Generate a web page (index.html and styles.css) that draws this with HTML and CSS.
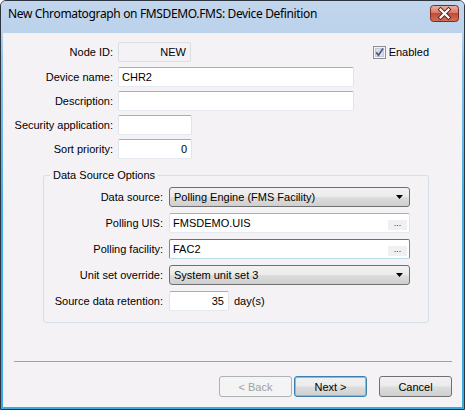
FILE: index.html
```html
<!DOCTYPE html>
<html>
<head>
<meta charset="utf-8">
<title>Device Definition</title>
<link rel="stylesheet" href="styles.css">
</head>
<body>
<div class="window">
  <div class="titlebar">
    <span class="title">New Chromatograph on FMSDEMO.FMS: Device Definition</span>
    <span class="close">
      <svg width="29" height="17" viewBox="0 0 29 17">
        <defs>
          <linearGradient id="cg" x1="0" y1="0" x2="0" y2="1">
            <stop offset="0" stop-color="#eab3a6"/>
            <stop offset="0.45" stop-color="#d77a68"/>
            <stop offset="0.5" stop-color="#c44a35"/>
            <stop offset="1" stop-color="#d0735a"/>
          </linearGradient>
        </defs>
        <rect x="0.5" y="0.5" width="28" height="16" rx="3" fill="url(#cg)" stroke="#7c2b22"/>
        <path d="M10.5 4.5 L18.5 12.5 M18.5 4.5 L10.5 12.5" stroke="#5a2019" stroke-width="4" stroke-linecap="square"/>
        <path d="M10.5 4.5 L18.5 12.5 M18.5 4.5 L10.5 12.5" stroke="#ffffff" stroke-width="2.2" stroke-linecap="square"/>
      </svg>
    </span>
  </div>
  <div class="client">
    <div class="top">
      <div class="row">
        <span class="lbl">Node ID:</span>
        <div class="field ro num w-id">NEW</div>
        <div class="check">
          <span class="cbox">
            <svg width="13" height="13" viewBox="0 0 13 13">
              <rect x="0.5" y="0.5" width="12" height="12" fill="#f4f4f4" stroke="#8e8f8f"/>
              <rect x="2.5" y="2.5" width="8" height="8" fill="#dcdfe6" stroke="#c4c8d0"/>
              <path d="M3.2 6.3 L5.4 9.3 L10 2.6" fill="none" stroke="#4a5c8f" stroke-width="1.7"/>
            </svg>
          </span>
          <span>Enabled</span>
        </div>
      </div>
      <div class="row">
        <span class="lbl">Device name:</span>
        <div class="field w-long">CHR2</div>
      </div>
      <div class="row">
        <span class="lbl">Description:</span>
        <div class="field w-long"></div>
      </div>
      <div class="row">
        <span class="lbl">Security application:</span>
        <div class="field w-short"></div>
      </div>
      <div class="row">
        <span class="lbl">Sort priority:</span>
        <div class="field num w-short">0</div>
      </div>
    </div>

    <div class="group">
      <span class="legend">Data Source Options</span>
      <div class="grow">
        <span class="glbl">Data source:</span>
        <div class="combo">
          <span>Polling Engine (FMS Facility)</span>
          <svg class="arrow" width="7" height="4" viewBox="0 0 7 4"><path d="M0 0 H7 L3.5 4 Z" fill="#000"/></svg>
        </div>
      </div>
      <div class="grow">
        <span class="glbl">Polling UIS:</span>
        <div class="field w-g">
          <span>FMSDEMO.UIS</span>
          <span class="dots">...</span>
        </div>
      </div>
      <div class="grow">
        <span class="glbl">Polling facility:</span>
        <div class="field w-g focus">
          <span>FAC2</span>
          <span class="dots">...</span>
        </div>
      </div>
      <div class="grow">
        <span class="glbl">Unit set override:</span>
        <div class="combo">
          <span>System unit set 3</span>
          <svg class="arrow" width="7" height="4" viewBox="0 0 7 4"><path d="M0 0 H7 L3.5 4 Z" fill="#000"/></svg>
        </div>
      </div>
      <div class="grow">
        <span class="glbl">Source data retention:</span>
        <div class="field num w-ret">35</div>
        <span class="unit">day(s)</span>
      </div>
    </div>

    <div class="sep"></div>

    <div class="buttons">
      <div class="btn disabled">&lt; Back</div>
      <div class="btn default">Next &gt;</div>
      <div class="btn cancel">Cancel</div>
    </div>
  </div>
</div>
</body>
</html>
```
FILE: styles.css
```css
html, body {
  margin: 0;
  padding: 0;
}
body {
  width: 465px;
  height: 410px;
  overflow: hidden;
  background: #ffffff;
  font-family: "Liberation Sans", Arial, sans-serif;
  font-size: 11px;
  letter-spacing: 0;
  color: #000;
}
.window {
  box-sizing: border-box;
  width: 465px;
  height: 410px;
  border: 1px solid #2c3440;
  border-radius: 6px 6px 0 0;
  background: linear-gradient(to bottom, #c6d9ee 0, #b9d1ea 32px, #8cc3ea 60px, #45aee2 200px, #3aaae0 100%);
  display: flex;
  flex-direction: column;
}
.titlebar {
  height: 32px;
  flex: none;
  display: flex;
  align-items: flex-start;
  justify-content: space-between;
  background: linear-gradient(to bottom, #c2d6ec, #bbd2eb);
  border-radius: 5px 5px 0 0;
}
.title {
  font-family: "Noto Sans", "Open Sans", sans-serif;
  font-size: 12px;
  letter-spacing: -0.35px;
  color: #000;
  margin: 4px 0 0 7px;
  line-height: 18px;
}
.close {
  margin: 4px 5px 0 0;
  height: 17px;
  line-height: 0;
}
.client {
  flex: 1;
  margin: 0 2px 2px 2px;
  background: #f5f2f6;
  display: flex;
  flex-direction: column;
}
.top {
  padding-top: 9px;
  display: flex;
  flex-direction: column;
  gap: 4px;
}
.row {
  display: flex;
  align-items: center;
  height: 20px;
}
.row:first-child {
  margin-bottom: 1px;
}
.lbl {
  width: 110px;
  text-align: right;
  margin-right: 5px;
  white-space: nowrap;
}
.field {
  box-sizing: border-box;
  height: 20px;
  background: #ffffff;
  border: 1px solid #e2e3ea;
  border-top-color: #abadb3;
  border-bottom-color: #e3e9ef;
  border-radius: 2px;
  display: flex;
  align-items: center;
  justify-content: space-between;
  padding: 0 3px 0 3px;
  white-space: nowrap;
}
.field.ro {
  background: #f5f2f6;
  border-color: #dcdde2;
}
.field.num {
  justify-content: flex-end;
  padding-right: 4px;
}
.field.focus {
  border-color: #5593c8;
  border-top-color: #3d7bad;
  border-bottom-color: #b7d9ed;
}
.w-id { width: 73px; }
.w-long { width: 236px; }
.w-short { width: 74px; }
.w-g { width: 241px; padding-right: 2px; }
.w-ret { width: 60px; }
.check {
  margin-left: auto;
  margin-right: 33px;
  display: flex;
  align-items: center;
  gap: 3px;
}
.cbox {
  width: 13px;
  height: 13px;
  line-height: 0;
}
.group {
  position: relative;
  box-sizing: border-box;
  margin: 16px 0 0 40px;
  width: 386px;
  border: 1px solid #d5dfe5;
  border-radius: 3px;
  padding: 11px 0 11px 0;
  display: flex;
  flex-direction: column;
  gap: 6px;
}
.legend {
  position: absolute;
  top: -7px;
  left: 6px;
  padding: 0 3px;
  background: #f5f2f6;
  line-height: 13px;
}
.grow {
  display: flex;
  align-items: center;
  height: 20px;
}
.glbl {
  width: 119px;
  text-align: right;
  margin-right: 6px;
  white-space: nowrap;
}
.combo {
  box-sizing: border-box;
  width: 241px;
  height: 20px;
  border: 1px solid #707070;
  border-radius: 3px;
  background: linear-gradient(to bottom, #f2f2f2 0, #ebebeb 48%, #dddddd 52%, #cfcfcf 100%);
  display: flex;
  align-items: center;
  justify-content: space-between;
  padding: 0 6px 0 4px;
  white-space: nowrap;
}
.arrow {
  display: block;
}
.dots {
  width: 19px;
  height: 10px;
  background: #f0f0f2;
  color: #333;
  font-size: 9px;
  line-height: 6px;
  text-align: center;
  letter-spacing: 0;
  margin-top: 3px;
}
.unit {
  margin-left: 5px;
}
.sep {
  margin: 38px 10px 0 11px;
  height: 1px;
  background: #a0a0a0;
}
.buttons {
  margin-top: 14px;
  display: flex;
  justify-content: flex-end;
  padding-right: 10px;
}
.btn {
  box-sizing: border-box;
  width: 73px;
  height: 21px;
  border: 1px solid #707070;
  border-radius: 3px;
  background: linear-gradient(to bottom, #f2f2f2 0, #ebebeb 48%, #dddddd 52%, #cfcfcf 100%);
  display: flex;
  align-items: center;
  justify-content: center;
}
.btn.disabled {
  border-color: #adb2b5;
  background: #f4f4f4;
  color: #a0a0a0;
}
.btn.default {
  margin-left: 2px;
  border-color: #3c7fb1;
  box-shadow: inset 0 0 0 1px #48d4fb;
}
.btn.cancel {
  margin-left: 12px;
}
```
